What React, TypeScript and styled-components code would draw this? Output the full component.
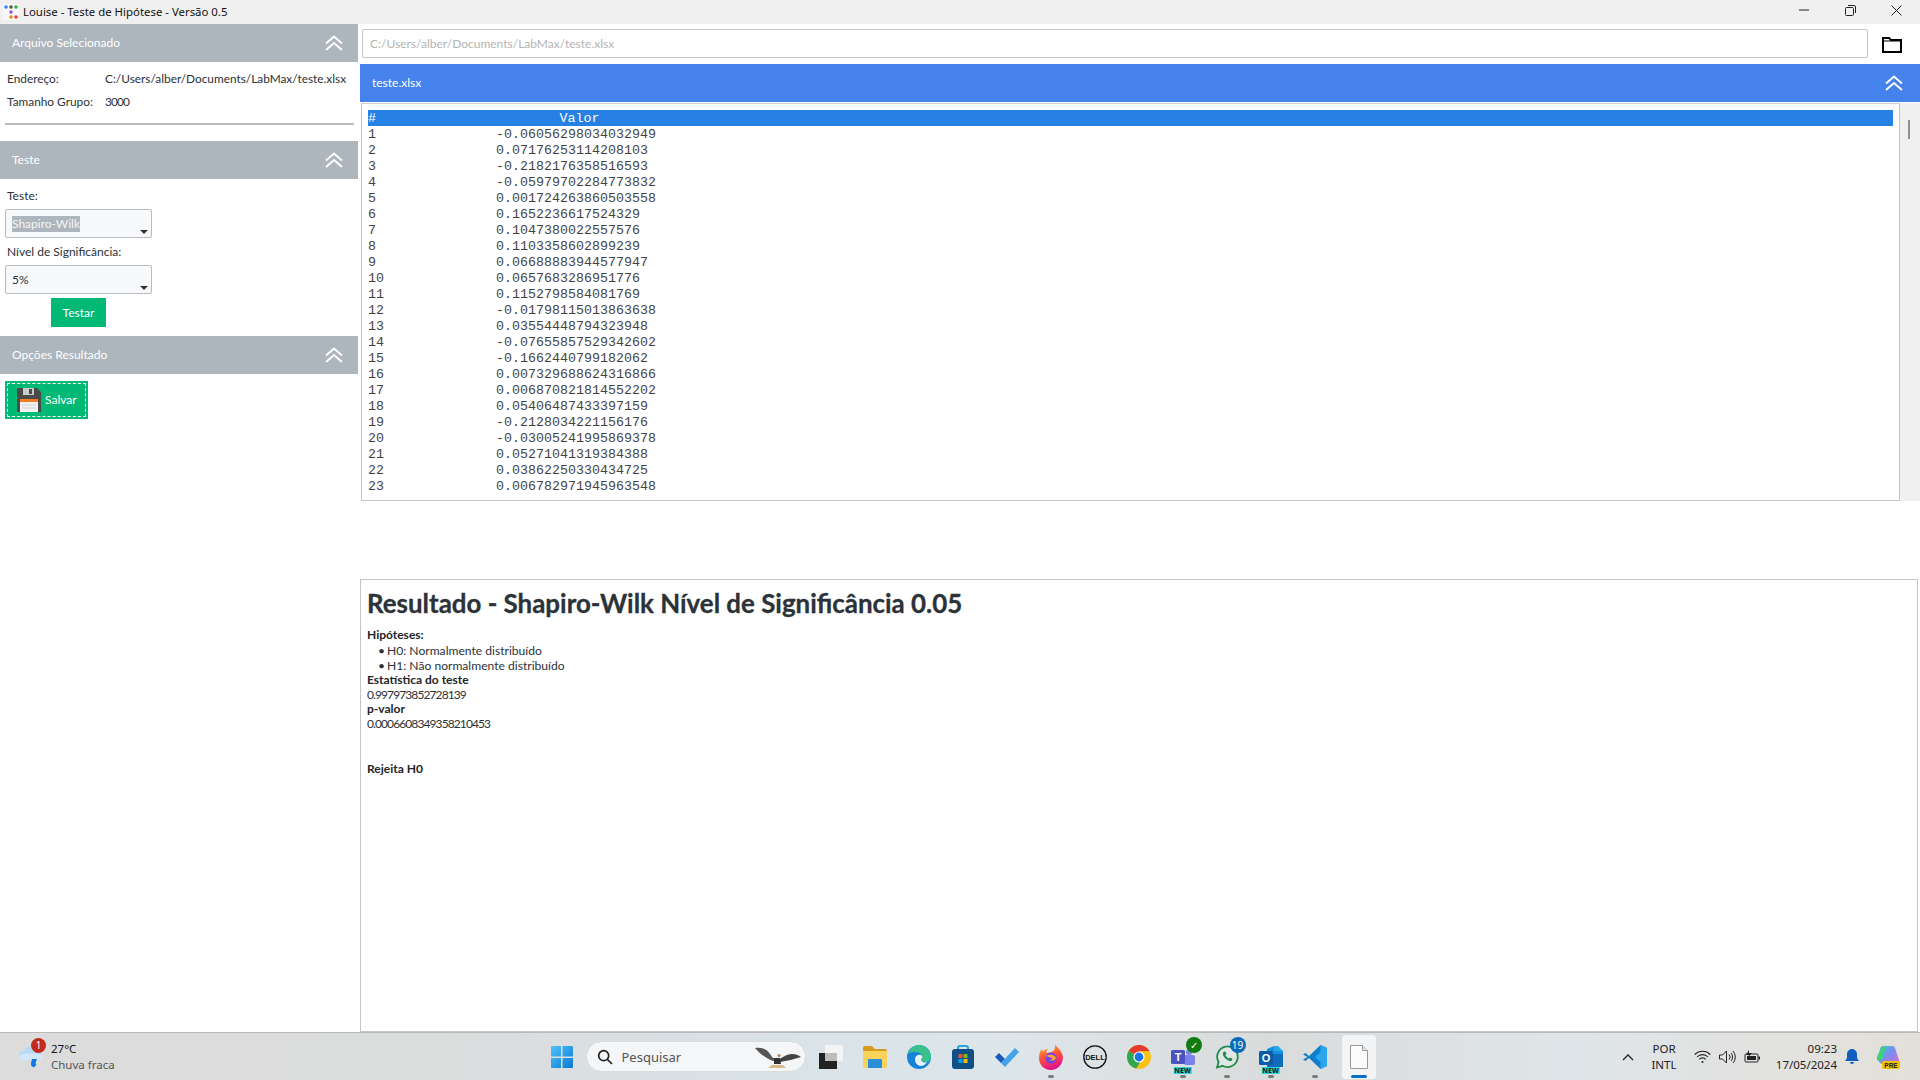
import React from "react";
import styled, { createGlobalStyle } from "styled-components";

const Global = createGlobalStyle`
  html, body { margin: 0; padding: 0; background: #fff; overflow: hidden; }
  * { box-sizing: border-box; }
  #root { width: 1920px; height: 1080px; }
`;

const Page = styled.div`
  width: 1920px; height: 1080px; display: flex; flex-direction: column; overflow: hidden;
  font-family: Lato, "Liberation Sans", sans-serif; font-size: 12px; color: #2b3238; background: #fff;
`;
const TitleBar = styled.header`
  height: 24px; background: #f0f0f0; display: flex; align-items: center; padding: 0 1px 0 3px;
  font-family: "Noto Sans", sans-serif; font-size: 11.4px; color: #111; flex: none;
`;
const TitleText = styled.span`margin-left: 4px; flex: 1; line-height: 24px;`;
const WinButton = styled.div`
  width: 46px; height: 20px; display: flex; align-items: center; justify-content: center; margin-top: -4px;
`;
const Main = styled.main`flex: 1; display: flex; min-height: 0;`;
const Sidebar = styled.aside`width: 358px; flex: none; display: flex; flex-direction: column;`;
const PanelHeader = styled.div<{ $blue?: boolean }>`
  height: 38px; flex: none; display: flex; align-items: center; justify-content: space-between;
  background: ${(p) => (p.$blue ? "#4582ec" : "#adb5bd")}; color: #fff; font-size: 12px;
  padding: 0 ${(p) => (p.$blue ? 17 : 15)}px 1px 12px;
`;
const InfoBlock = styled.div`height: 79px; padding: 5px 0 0 7px; font-size: 11.85px;`;
const InfoRow = styled.div`display: grid; grid-template-columns: 98px 1fr; height: 23px; line-height: 23px; white-space: nowrap;`;
const Rule = styled.hr`border: 0; border-top: 2px solid #b8bcc0; margin: 10px 0 0 -2px; width: 349px; height: 0;`;
const FormBlock = styled.div`padding: 0 5px; height: 157px; display: flex; flex-direction: column;`;
const Label = styled.label<{ $top: number }>`
  display: block; margin: ${(p) => p.$top}px 0 0 2px; height: 15px; line-height: 15px; color: #2b3238;
`;
const Combo = styled.div`
  width: 147px; height: 29px; margin-top: 6px; border: 1px solid #b9bcc0; border-radius: 2px; background: #f8f9fa;
  position: relative; display: flex; align-items: center; padding-left: 6px; flex: none;
`;
const ComboArrow = styled.span`
  position: absolute; right: 3px; bottom: 3px; width: 0; height: 0;
  border-left: 4px solid transparent; border-right: 4px solid transparent; border-top: 4px solid #333;
`;
const Selected = styled.span<{ $sel?: boolean }>`
  line-height: 16px;
  ${(p) => p.$sel && "background:#adb5bd; color:#f4f5f6;"}
`;
const TestButton = styled.div`
  width: 55px; height: 29px; margin: 4px 0 0 46px; background: #02b875; color: #fff;
  display: flex; align-items: center; justify-content: center; font-size: 12px;
`;
const SaveWrap = styled.div`padding: 7px 5px;`;
const SaveButton = styled.div`
  width: 83px; height: 38px; background: #02b875; color: #fff; padding: 2px;
  display: flex;
`;
const SaveInner = styled.div`
  flex: 1; border: 1px dashed #fff; display: flex; align-items: center; gap: 4px; padding: 0 0 1px 9px;
`;
const Content = styled.section`flex: 1; min-width: 0; display: flex; flex-direction: column; padding-left: 2px;`;
const PathRow = styled.div`display: flex; align-items: flex-start; height: 40px; padding-top: 5px; flex: none;`;
const PathInput = styled.div`
  width: 1506px; height: 29px; margin-left: 2px; border: 1px solid #c4c4c4; border-radius: 2px; background: #fff;
  color: #b4b4b4; display: flex; align-items: center; padding-left: 7px;
`;
const FolderSlot = styled.div`width: 48px; height: 29px; display: flex; justify-content: center; align-items: center; padding-top: 2px;`;
const FileBar = styled(PanelHeader)`margin-bottom: 1px;`;
const TableArea = styled.div`display: flex; height: 398px; flex: none;`;
const TableBox = styled.div`
  width: 1539px; margin-left: 1px; border: 1px solid #c4c4c4; border-top-color: #d0d0d0; padding: 6px 6px 0;
  font-family: "Liberation Mono", monospace; font-size: 13.33px; color: #444; overflow: hidden;
`;
const Row = styled.div<{ $head?: boolean }>`
  display: grid; grid-template-columns: 128px 167px 1fr; height: 16px; line-height: 17px; white-space: pre;
  ${(p) => p.$head && "background:#2780e3; color:#fff;"}
`;
const ValorHead = styled.span`text-align: center;`;
const Scroll = styled.div`width: 20px; background: #f0f0f0; position: relative;`;
const Thumb = styled.div`position: absolute; left: 8px; top: 17px; width: 2px; height: 19px; background: #8f8f8f;`;
const Result = styled.article`
  margin-top: 78px; height: 453px; width: 1558px; border: 1px solid #c4c4c4; padding: 0 6px;
  flex: none;
`;
const Heading = styled.h1`
  font-size: 25.9px; font-weight: 700; margin: 8px 0 9px; line-height: 31px; color: #2b3238;
  -webkit-text-stroke: 0.3px #2b3238;
`;
const Bold = styled.div`font-weight: 700; line-height: 14.8px; color: #212529;`;
const Narrow = styled.span`letter-spacing: -0.9px;`;
const Line = styled.div`line-height: 14.8px;`;
const Bullet = styled.div`
  line-height: 15px; padding-left: 20px; position: relative; font-size: 12.1px;
  &::before { content: "•"; position: absolute; left: 11px; }
`;
const Verdict = styled(Bold)`margin-top: 30px;`;

const Taskbar = styled.footer`
  height: 48px; flex: none; display: grid; grid-template-columns: 1fr auto 1fr; align-items: center;
  border-top: 1px solid #b9b9b9;
  background: linear-gradient(90deg, #dcdcdc 0%, #dbdcdc 22%, #d9e3e8 42%, #dde6ea 52%, #dadcdc 66%, #dfe5e8 82%, #e4e0d9 100%);
`;
const Weather = styled.div`display: flex; align-items: center; padding-left: 18px; gap: 8px; position: relative;`;
const WeatherText = styled.div`
  font-family: "Noto Sans", sans-serif; font-size: 11.5px; line-height: 16px; color: #111;
  & small { display: block; font-size: 11.5px; color: #555; }
`;
const RedBadge = styled.span`
  position: absolute; left: 31px; top: -3px; width: 15px; height: 15px; border-radius: 50%; background: #c42b1c; color: #fff;
  font: 10px/15px "Noto Sans", sans-serif; text-align: center;
`;
const Center = styled.div`display: flex; align-items: center; height: 47px;`;
const SearchBox = styled.div`
  width: 220px; height: 31px; border-radius: 16px; background: #f4f6f8; border: 1px solid #d9dcde; margin: 0 3px 0 2px;
  display: flex; align-items: center; padding-left: 10px; gap: 9px; font: 13px "Noto Sans", sans-serif; color: #555; position: relative;
`;
const Condor = styled.span`position: absolute; right: 3px; top: 4px; display: flex;`;
const TaskIcon = styled.div<{ $active?: boolean }>`
  width: 44px; height: 44px; position: relative; display: flex; align-items: center; justify-content: center; border-radius: 4px;
  ${(p) => p.$active && "background:#f3f4f5; width:34px; margin:0 5px;"}
`;
const Dot = styled.span<{ $active?: boolean }>`
  position: absolute; left: 50%; bottom: 1px; transform: translateX(-50%); height: 3px; border-radius: 2px;
  width: ${(p) => (p.$active ? 16 : 6)}px; background: ${(p) => (p.$active ? "#0a6fc9" : "#7c7c7c")};
`;
const Pill = styled.span<{ $bg: string }>`
  position: absolute; right: 3px; top: 2px; min-width: 16px; height: 16px; border-radius: 50%;
  background: ${(p) => p.$bg}; color: #fff; font: 10px/16px "Noto Sans", sans-serif; text-align: center;
`;
const NewTag = styled.span`
  position: absolute; left: 50%; transform: translateX(-50%); bottom: 5px; background: #2fd3dc; color: #111; font: 700 7px/7px "Noto Sans", sans-serif; padding: 0 1px;
`;
const Tray = styled.div`display: flex; align-items: center; justify-content: flex-end; height: 47px; padding-right: 11px;`;
const TrayCell = styled.div<{ $w: number }>`width: ${(p) => p.$w}px; display: flex; justify-content: center; align-items: center;`;
const Lang = styled.div`font: 11.5px/16px "Noto Sans", sans-serif; text-align: center; color: #222; width: 52px;`;
const Clock = styled.div`font: 11.5px/16px "Noto Sans", sans-serif; text-align: right; color: #222; width: 72px;`;

const Chevrons = () => (
  <svg width="18" height="16" viewBox="0 0 18 16" fill="none" stroke="#fff" strokeWidth="1.900">
    <path d="M1 8.500 9 1.500 17 8.500" />
    <path d="M1 15 9 8 17 15" />
  </svg>
);

const AppLogo = () => (
  <svg width="16" height="16" viewBox="0 0 16 16">
    <rect width="16" height="16" fill="#f7f7f7" />
    <circle cx="3" cy="3" r="1.800" fill="#3b82f6" /><circle cx="8" cy="3" r="1.800" fill="#555" /><circle cx="13" cy="3" r="1.800" fill="#2fb344" />
    <circle cx="8" cy="8" r="1.800" fill="#9b59d0" />
    <circle cx="8" cy="13" r="1.800" fill="#f08a24" /><circle cx="13" cy="13" r="1.800" fill="#e8413c" />
  </svg>
);

const Floppy = () => (
  <svg width="24" height="24" viewBox="0 0 24 24">
    <path d="M0 0h20l4 4v20H0z" fill="#4a4a4a" />
    <rect x="6" y="0" width="11" height="7" fill="#c9c9c9" /><rect x="12" y="1" width="3" height="5" fill="#4a4a4a" />
    <rect x="3" y="11" width="18" height="13" fill="#f2f2f2" /><rect x="3" y="11" width="18" height="3" fill="#f47b20" />
    <path d="M5 17h14M5 20h14" stroke="#cfcfcf" strokeWidth="1" />
  </svg>
);

const WinLogo = () => (
  <svg width="24" height="24" viewBox="0 0 24 24">
    <defs><linearGradient id="wl" x1="0" y1="0" x2="1" y2="1"><stop offset="0" stopColor="#4fc3f7" /><stop offset="1" stopColor="#0a78d4" /></linearGradient></defs>
    <path d="M1 2a1 1 0 0 1 1-1h9v10.500H1zM12.500 1H22a1 1 0 0 1 1 1v9.500H12.500zM1 13h10v10H2a1 1 0 0 1-1-1zM12.500 13H23v9a1 1 0 0 1-1 1h-9.500z" fill="url(#wl)" />
  </svg>
);
const SearchIc = () => (
  <svg width="16" height="16" viewBox="0 0 16 16" fill="none" stroke="#222" strokeWidth="1.700"><circle cx="6.700" cy="6.700" r="5" /><path d="M10.500 10.500 15 15" /></svg>
);
const CondorIc = () => (
  <svg width="48" height="24" viewBox="0 0 48 24">
    <path d="M1 2c7-1 13 1 17 9l4 3-3 1C12 12 6 8 1 2z" fill="#555" />
    <path d="M47 11c-5-4-12-4-18 0l-5 3 2 2c7-1 14-3 21-5z" fill="#444" />
    <path d="M20 12h6l1 6h-7z" fill="#333" /><circle cx="25" cy="9.500" r="1.600" fill="#c9804a" />
    <path d="M14 22h18l-3-3H18z" fill="#d9b98a" />
  </svg>
);
const TaskViewIc = () => (
  <svg width="24" height="24" viewBox="0 0 24 24">
    <rect x="0" y="8" width="18" height="16" fill="#222" /><rect x="6" y="0" width="18" height="16" rx="1" fill="#f4f4f4" />
    <rect x="6" y="8" width="12" height="8" fill="#bdbdbd" />
  </svg>
);
const FolderIc = () => (
  <svg width="24" height="22" viewBox="0 0 24 22">
    <path d="M0 2a2 2 0 0 1 2-2h7l3 3h10a2 2 0 0 1 2 2v2H0z" fill="#d69c1c" /><path d="M0 5h24v15a2 2 0 0 1-2 2H2a2 2 0 0 1-2-2z" fill="#fbd35c" />
    <path d="M5 14a1 1 0 0 1 1-1h12a1 1 0 0 1 1 1v8H5z" fill="#2a8fd8" />
  </svg>
);
const EdgeIc = () => (
  <svg width="24" height="24" viewBox="0 0 24 24">
    <circle cx="12" cy="12" r="12" fill="#1583d8" />
    <path d="M1 9C3 3 8 0 12 0c7 0 12 5 12 12 0 3-2 5-5 5-3 0-5-1-5-3 2-1 2-3 0-5-4-3-10-3-13 0z" fill="#37c38a" />
    <path d="M8 14c0-3 3-5 6-4 2 1 2 3 0 4 0 3 3 4 6 3-2 4-7 5-9 3-2-1-3-3-3-6z" fill="#e8f1f5" />
  </svg>
);
const StoreIc = () => (
  <svg width="24" height="24" viewBox="0 0 24 24">
    <path d="M7 5V3a2 2 0 0 1 2-2h6a2 2 0 0 1 2 2v2" fill="none" stroke="#2aa4dc" strokeWidth="2" />
    <rect x="1" y="4" width="22" height="20" rx="3" fill="#0f4f86" />
    <rect x="7.500" y="9" width="4" height="4" fill="#f25022" /><rect x="12.500" y="9" width="4" height="4" fill="#7fba00" />
    <rect x="7.500" y="14" width="4" height="4" fill="#00a4ef" /><rect x="12.500" y="14" width="4" height="4" fill="#ffb900" />
  </svg>
);
const TodoIc = () => (
  <svg width="24" height="20" viewBox="0 0 24 20">
    <path d="M0 10 4 6l6 6-4 4z" fill="#185abd" /><path d="M6 16 20 1l4 4L10 20z" fill="#45a3ec" />
  </svg>
);
const FirefoxIc = () => (
  <svg width="24" height="26" viewBox="0 0 24 26">
    <defs><linearGradient id="ff" x1="0" y1="0" x2="0.300" y2="1"><stop offset="0" stopColor="#ffbd2e" /><stop offset=".5" stopColor="#ff5a36" /><stop offset="1" stopColor="#e31587" /></linearGradient></defs>
    <path d="M16 0c1 3 7 6 8 13 0 7-5 13-12 13S0 21 0 14C0 10 1 7 3 5l1 3c1-2 3-3 5-3-2 2-2 3-1 4 3-1 9 0 8-9z" fill="url(#ff)" />
    <circle cx="12" cy="14" r="5.500" fill="#7542e5" /><path d="M7 12c3-2 9-2 10 2-1 3-5 3-7 2 3 0 4-1 3-2-2-1-4-1-6-2z" fill="#ffa436" />
  </svg>
);
const DellIc = () => (
  <svg width="24" height="24" viewBox="0 0 24 24">
    <circle cx="12" cy="12" r="11.200" fill="none" stroke="#111" strokeWidth="1.300" />
    <text x="12" y="14.500" textAnchor="middle" fontFamily="Liberation Sans, sans-serif" fontSize="7.500" fontWeight="700" fill="#111">DELL</text>
  </svg>
);
const ChromeIc = () => (
  <svg width="24" height="24" viewBox="0 0 24 24">
    <circle cx="12" cy="12" r="12" fill="#fbc116" />
    <path d="M12 12 1.600 6A12 12 0 0 1 22.400 6H12z" fill="#e33b2e" />
    <path d="M12 12 1.600 6A12 12 0 0 0 9 23.600L14 16z" fill="#2da94f" />
    <circle cx="12" cy="12" r="5.600" fill="#fff" /><circle cx="12" cy="12" r="4.400" fill="#1a73e8" />
  </svg>
);
const TeamsIc = () => (
  <svg width="24" height="22" viewBox="0 0 24 22">
    <circle cx="18" cy="6" r="3" fill="#7b83eb" /><rect x="13" y="9" width="11" height="10" rx="2" fill="#7b83eb" />
    <rect x="0" y="4" width="14" height="14" rx="1.500" fill="#4b53bc" />
    <text x="7" y="15" textAnchor="middle" fontFamily="Liberation Sans, sans-serif" fontSize="11" fontWeight="700" fill="#fff">T</text>
  </svg>
);
const WhatsIc = () => (
  <svg width="24" height="24" viewBox="0 0 24 24" fill="none">
    <path d="M2 22.500 3.600 17A10.300 10.300 0 1 1 7.500 20.800z" stroke="#1f8a4c" strokeWidth="1.800" fill="#dfe6e4" />
    <path d="M8.500 7c-1 1-1 3 1 5.500S14 16.500 16 16c1.500-.5 1.500-2 1-2.500l-2-1-1 1c-1 0-3-2-3.500-3.500l1-1-1-2.200c-.6-.4-1.500-.3-2 .2z" fill="#1f8a4c" />
  </svg>
);
const OutlookIc = () => (
  <svg width="24" height="22" viewBox="0 0 24 22">
    <path d="M8 3 15 0l9 5v9H8z" fill="#1490df" /><path d="M15 0h4l5 5h-9z" fill="#28a8ea" /><path d="M8 8h16v13H8z" fill="#0f6cbd" />
    <rect x="0" y="5" width="14" height="14" rx="1.500" fill="#0a5ca8" />
    <text x="7" y="16" textAnchor="middle" fontFamily="Liberation Sans, sans-serif" fontSize="11" fontWeight="700" fill="#fff">O</text>
  </svg>
);
const VSCodeIc = () => (
  <svg width="24" height="24" viewBox="0 0 24 24">
    <path d="M17.500 0 24 3v18l-6.500 3L6 13l-3.500 3L0 14.500 4.500 12 0 9.500 2.500 8 6 11z" fill="#0f7fcb" />
    <path d="M17.500 0 24 3v18l-6.500 3V17l-5.500-5 5.500-5z" fill="#2aa5ee" />
  </svg>
);
const FileIc = () => (
  <svg width="18" height="24" viewBox="0 0 18 24">
    <path d="M.5.500h12l5 5v18H.5z" fill="#fbfbfb" stroke="#9a9a9a" /><path d="M12.500.500v5h5" fill="#e6e6e6" stroke="#9a9a9a" />
  </svg>
);
const CloudIc = () => (
  <svg width="25" height="24" viewBox="0 0 25 24">
    <path d="M5 15a4.500 4.500 0 0 1 1-9 6 6 0 0 1 11-1 5 5 0 0 1 2 10z" fill="#b9d9f7" />
    <path d="M1 11c4-3 14-4 23-1v1c0 3-2 4-4 4H5c-3 0-4-2-4-4z" fill="#d3e7fa" />
    <path d="M14 14h5l-1.500 4a2.500 2.500 0 0 1-4 3c-1-1 0-5 .500-7z" fill="#0f78e8" />
  </svg>
);
const Chev = () => (<svg width="12" height="8" viewBox="0 0 12 8" fill="none" stroke="#222" strokeWidth="1.300"><path d="M1 7 6 2l5 5" /></svg>);
const Wifi = () => (
  <svg width="17" height="14" viewBox="0 0 17 14" fill="none" stroke="#222" strokeWidth="1.100">
    <path d="M.7 4.500a11 11 0 0 1 15.600 0M3 7a7.500 7.500 0 0 1 11 0M5.300 9.400a4.200 4.200 0 0 1 6.400 0" /><circle cx="8.500" cy="12" r="1" fill="#222" stroke="none" />
  </svg>
);
const Speaker = () => (
  <svg width="17" height="14" viewBox="0 0 17 14" fill="none" stroke="#222" strokeWidth="1"><path d="M.5 5v4h3l4 4V1l-4 4zM10 4.500a3.500 3.500 0 0 1 0 5M12 3a6 6 0 0 1 0 8M14 1a9 9 0 0 1 0 12" /></svg>
);
const Battery = () => (
  <svg width="17" height="14" viewBox="0 0 17 14" fill="none"><rect x="1" y="4" width="13" height="8" rx="1" stroke="#222" /><rect x="3" y="6" width="9" height="4" fill="#222" /><rect x="14.500" y="6.500" width="1.500" height="3" fill="#222" /><path d="M5 0 2 5h3L3.500 8 8 3H5z" fill="#222" /></svg>
);
const Bell = () => (
  <svg width="14" height="16" viewBox="0 0 14 16"><path d="M7 0a5 5 0 0 1 5 5v4l2 3H0l2-3V5a5 5 0 0 1 5-5zM5 13h4a2 2 0 0 1-4 0z" fill="#0f5fc0" /></svg>
);
const Copilot = () => (
  <svg width="24" height="24" viewBox="0 0 24 24">
    <defs><linearGradient id="cp" x1="0" y1="0" x2="1" y2="1"><stop offset="0" stopColor="#3ec4e8" /><stop offset=".5" stopColor="#7a8cf0" /><stop offset="1" stopColor="#e56ad0" /></linearGradient></defs>
    <path d="M7 1h9c3 0 3 2 4 5l3 9c0 3-2 4-5 4H7c-3 0-4-2-5-5l2-9c0-2 1-4 3-4z" fill="url(#cp)" />
    <path d="M1 12 5 3c1-2 3-2 5-2L7 12c-1 4-4 5-6 3z" fill="#3fd07d" />
    <rect x="6" y="16" width="18" height="8" rx="2" fill="#f2c100" />
    <text x="15" y="22.500" textAnchor="middle" fontFamily="Liberation Sans, sans-serif" fontSize="6.500" fontWeight="700" fill="#222">PRE</text>
  </svg>
);

const values = [
  "-0.06056298034032949", "0.07176253114208103", "-0.2182176358516593", "-0.05979702284773832",
  "0.001724263860503558", "0.1652236617524329", "0.1047380022557576", "0.1103358602899239",
  "0.06688883944577947", "0.0657683286951776", "0.1152798584081769", "-0.01798115013863638",
  "0.03554448794323948", "-0.07655857529342602", "-0.1662440799182062", "0.007329688624316866",
  "0.006870821814552202", "0.05406487433397159", "-0.2128034221156176", "-0.03005241995869378",
  "0.05271041319384388", "0.03862250330434725", "0.006782971945963548",
];

export default function App() {
  return (
    <Page>
      <Global />
      <TitleBar>
        <AppLogo />
        <TitleText>Louise - Teste de Hipótese - Versão 0.5</TitleText>
        <WinButton><svg width="10" height="10" viewBox="0 0 10 10"><path d="M0 5h10" stroke="#222" /></svg></WinButton>
        <WinButton><svg width="11" height="11" viewBox="0 0 11 11" fill="none" stroke="#222"><rect x=".5" y="2.500" width="8" height="8" rx="1" /><path d="M3 .5h6a1.500 1.500 0 0 1 1.500 1.500v6" /></svg></WinButton>
        <WinButton><svg width="11" height="11" viewBox="0 0 11 11" fill="none" stroke="#222"><path d="M.5.5l10 10M10.500.5l-10 10" /></svg></WinButton>
      </TitleBar>
      <Main>
        <Sidebar>
          <PanelHeader>Arquivo Selecionado<Chevrons /></PanelHeader>
          <InfoBlock>
            <InfoRow><span>Endereço:</span><span>C:/Users/alber/Documents/LabMax/teste.xlsx</span></InfoRow>
            <InfoRow><span>Tamanho Grupo:</span><Narrow>3000</Narrow></InfoRow>
            <Rule />
          </InfoBlock>
          <PanelHeader>Teste<Chevrons /></PanelHeader>
          <FormBlock>
            <Label $top={9}>Teste:</Label>
            <Combo><Selected $sel>Shapiro-Wilk</Selected><ComboArrow /></Combo>
            <Label $top={6}>Nível de Significância:</Label>
            <Combo><Selected>5%</Selected><ComboArrow /></Combo>
            <TestButton>Testar</TestButton>
          </FormBlock>
          <PanelHeader>Opções Resultado<Chevrons /></PanelHeader>
          <SaveWrap>
            <SaveButton>
              <SaveInner><Floppy /><span>Salvar</span></SaveInner>
            </SaveButton>
          </SaveWrap>
        </Sidebar>
        <Content>
          <PathRow>
            <PathInput>C:/Users/alber/Documents/LabMax/teste.xlsx</PathInput>
            <FolderSlot>
              <svg width="20" height="16" viewBox="0 0 20 16" fill="none">
                <path d="M1 15V1h6l2 2h10v12z" stroke="#000" strokeWidth="2" /><path d="M1 4h18" stroke="#000" strokeWidth="1" />
              </svg>
            </FolderSlot>
          </PathRow>
          <FileBar $blue>teste.xlsx<Chevrons /></FileBar>
          <TableArea>
            <TableBox>
              <Row $head><span>#</span><ValorHead>Valor</ValorHead><span /></Row>
              {values.map((v, i) => (
                <Row key={v}><span>{i + 1}</span><span>{v}</span><span /></Row>
              ))}
            </TableBox>
            <Scroll><Thumb /></Scroll>
          </TableArea>
          <Result>
            <Heading>Resultado - Shapiro-Wilk Nível de Significância 0.05</Heading>
            <Bold>Hipóteses:</Bold>
            <Bullet>H0: Normalmente distribuído</Bullet>
            <Bullet>H1: Não normalmente distribuído</Bullet>
            <Bold>Estatística do teste</Bold>
            <Line><Narrow>0.997973852728139</Narrow></Line>
            <Bold>p-valor</Bold>
            <Line><Narrow>0.0006608349358210453</Narrow></Line>
            <Verdict>Rejeita H0</Verdict>
          </Result>
        </Content>
      </Main>
      <Taskbar>
        <Weather>
          <CloudIc />
          <RedBadge>1</RedBadge>
          <WeatherText>27°C<small>Chuva fraca</small></WeatherText>
        </Weather>
        <Center>
          <TaskIcon><WinLogo /></TaskIcon>
          <SearchBox><SearchIc />Pesquisar<Condor><CondorIc /></Condor></SearchBox>
          <TaskIcon><TaskViewIc /></TaskIcon>
          <TaskIcon><FolderIc /></TaskIcon>
          <TaskIcon><EdgeIc /></TaskIcon>
          <TaskIcon><StoreIc /></TaskIcon>
          <TaskIcon><TodoIc /></TaskIcon>
          <TaskIcon><FirefoxIc /><Dot /></TaskIcon>
          <TaskIcon><DellIc /></TaskIcon>
          <TaskIcon><ChromeIc /></TaskIcon>
          <TaskIcon><TeamsIc /><NewTag>NEW</NewTag><Pill $bg="#107c10">✓</Pill><Dot /></TaskIcon>
          <TaskIcon><WhatsIc /><Pill $bg="#0b6bb8">19</Pill><Dot /></TaskIcon>
          <TaskIcon><OutlookIc /><NewTag>NEW</NewTag><Dot /></TaskIcon>
          <TaskIcon><VSCodeIc /><Dot /></TaskIcon>
          <TaskIcon $active><FileIc /><Dot $active /></TaskIcon>
        </Center>
        <Tray>
          <TrayCell $w={20}><Chev /></TrayCell>
          <Lang>POR<br />INTL</Lang>
          <TrayCell $w={25}><Wifi /></TrayCell>
          <TrayCell $w={25}><Speaker /></TrayCell>
          <TrayCell $w={25}><Battery /></TrayCell>
          <Clock>09:23<br />17/05/2024</Clock>
          <TrayCell $w={30}><Bell /></TrayCell>
          <TrayCell $w={42}><Copilot /></TrayCell>
        </Tray>
      </Taskbar>
    </Page>
  );
}
